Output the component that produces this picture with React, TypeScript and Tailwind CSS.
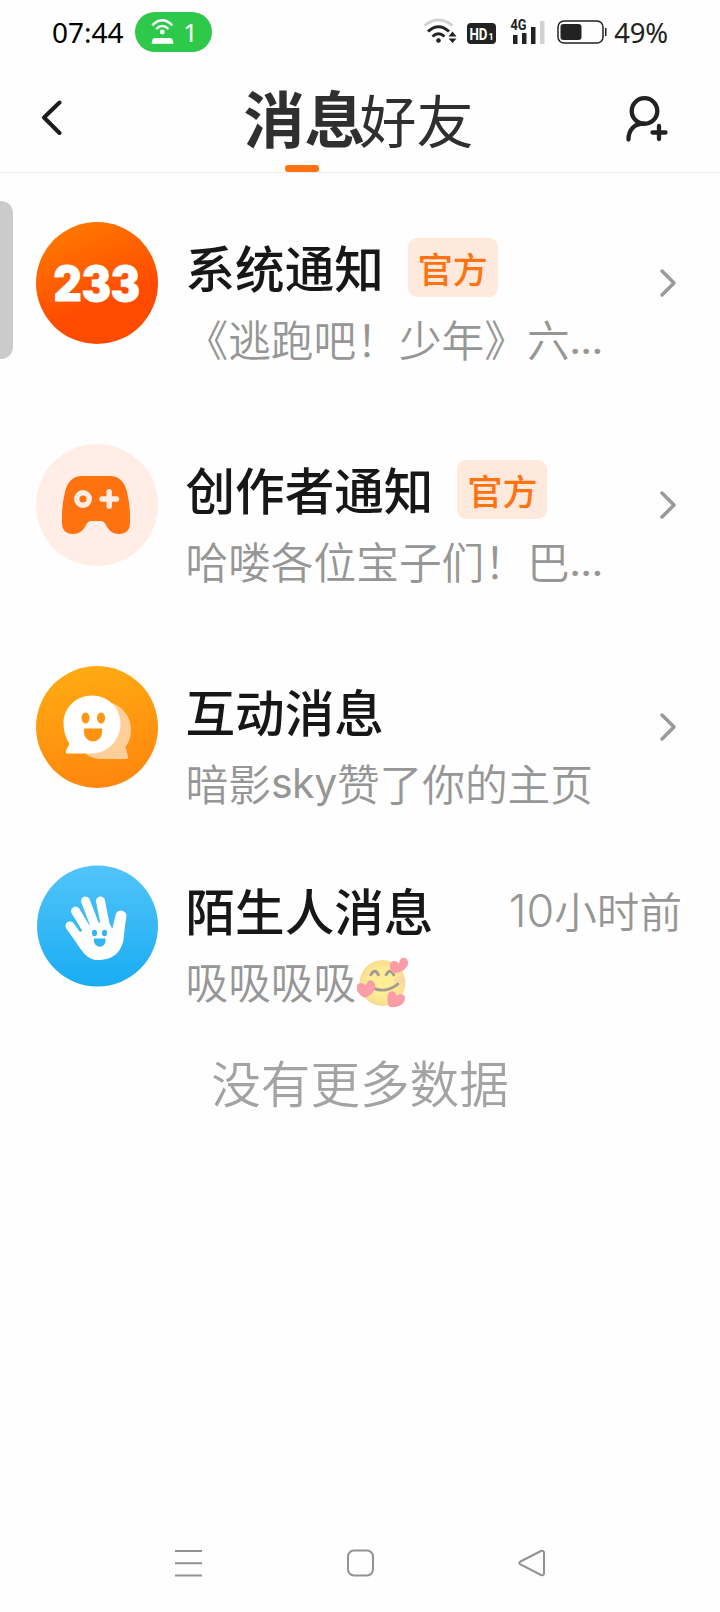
import type { ReactNode } from "react";

function StatusBar() {
  return (
    <div className="flex h-16 items-center pl-[52px] pr-[52px] font-['Noto_Sans'] text-[28px] leading-none text-black">
      <span className="w-[83px]">07:44</span>
      <span className="flex h-10 w-[77px] items-center rounded-full bg-[#2ec84b] pl-4 text-[26px] text-white">
        <svg width="23" height="26" viewBox="0 0 23 26" fill="none" stroke="#fff" strokeWidth="2.4">
          <path d="M1.3 6.4Q11.3-3.8 21.3 6.4" />
          <path d="M5.2 10Q11.3 3.8 17.4 10" />
          <circle cx="11.3" cy="13" r="2.4" fill="#fff" stroke="none" />
          <path d="M4 19h15q2 0 2.7 2l.8 3.7H.5L1.3 21Q2 19 4 19Z" fill="#fff" stroke="none" />
        </svg>
        <span className="ml-[9px]">1</span>
      </span>
      <span className="flex-1" />
      <svg width="34" height="28" viewBox="0 0 34 28" fill="none" className="mr-[10px]">
        <path d="M1.5 7.5Q15.500-3.500 29.500 7.500" stroke="#d2d2d2" strokeWidth="2.7" />
        <path d="M5 13.500Q15.500 4 26 13.500" stroke="#222" strokeWidth="3" />
        <path d="M9.500 18.500Q15.500 13 21.500 18.500" stroke="#222" strokeWidth="3" />
        <circle cx="15.500" cy="22.500" r="2.300" fill="#222" />
        <path d="m29.500 13.500 4 5h-8ZM29.500 25l-4-4.600h8Z" fill="#222" />
      </svg>
      <span className="mr-[14px] mt-[2px] flex h-[21px] w-[29px] items-center justify-center rounded-[4px] bg-[#222]">
        <svg width="25" height="17" viewBox="0 0 25 17" fontFamily="Roboto" fontWeight="700" fill="#fff">
          <text x="0.500" y="14.500" fontSize="17" textLength="18" lengthAdjust="spacingAndGlyphs">HD</text>
          <text x="19.500" y="14.500" fontSize="9">1</text>
        </svg>
      </span>
      <svg width="36" height="28" viewBox="0 -1 36 28" className="mr-[11px]">
        <text x="0.500" y="11" textLength="16" lengthAdjust="spacingAndGlyphs" fontFamily="Roboto" fontSize="14.500" fontWeight="700" fill="#222">4G</text>
        <path d="M3 16h4.500v9H3ZM12 14h4.500v11H12ZM21 8h4.500v17H21Z" fill="#222" />
        <path d="M30 2h4.500v23H30Z" fill="#d2d2d2" />
      </svg>
      <svg width="50" height="24" viewBox="0 0 50 24" className="mr-[7px]">
        <rect x="1" y="1" width="45" height="22" rx="6" fill="none" stroke="#222" strokeWidth="1.500" />
        <rect x="3.500" y="4" width="21" height="16" rx="3" fill="#222" />
        <path d="M48 8h1.500v8H48Z" fill="#222" />
      </svg>
      <span className="mt-px text-[27.500px] tracking-[-0.200px] text-[#222]">49%</span>
    </div>
  );
}

function Header() {
  return (
    <div className="flex h-[109px] items-center border-b border-[#ececec] pl-[41px] pr-[52px] text-[#2f2f2f]">
      <svg width="22" height="36" viewBox="0 0 22 36" fill="none" stroke="#1c1c1c" strokeWidth="4" strokeLinecap="round" strokeLinejoin="round">
        <path d="M18.500 2.500 3 17.500l15.500 15.500" />
      </svg>
      <div className="flex h-full flex-1 justify-center pl-[28px]">
        <div className="relative flex items-center pb-[3px] text-[61px] font-bold leading-none">
          消息
          <span className="absolute bottom-0 left-[42px] h-[7px] w-[34px] rounded-[3px] bg-[#ff7210]" />
        </div>
        <div className="-ml-[6px] flex items-center text-[57px] font-normal leading-none">好友</div>
      </div>
      <svg width="42" height="46" viewBox="0 0 42 46" fill="none" stroke="#222" strokeWidth="4.300" className="mt-[1px]">
        <circle cx="18.500" cy="15" r="12.800" />
        <path d="M2.500 43.500C2.500 34 8 27.500 18 27.500" strokeLinecap="round" />
        <path d="M26.500 36.500h13M33 30v13" strokeLinecap="round" />
      </svg>
    </div>
  );
}

function LogoAvatar() {
  return (
    <svg width="122" height="122" viewBox="0 0 122 122">
      <defs>
        <linearGradient id="logo" x1="0.2" y1="0" x2="0.5" y2="0.7">
          <stop offset="0" stopColor="#ff7b00" />
          <stop offset="1" stopColor="#ff4b00" />
        </linearGradient>
      </defs>
      <circle cx="61" cy="61" r="61" fill="url(#logo)" />
      <text x="17.500" y="78.500" textLength="86.500" lengthAdjust="spacingAndGlyphs" fontFamily="Inter" fontSize="48" fontWeight="900" fill="#fff" stroke="#fff" strokeWidth="1">233</text>
    </svg>
  );
}

function GamepadAvatar() {
  return (
    <svg width="122" height="122" viewBox="0 0 122 122">
      <circle cx="61" cy="61" r="61" fill="#ffede6" />
      <path d="M46 32H74C84 32 89 39 91 48Q94 60 94 72V79C94 86 90 90 83 90C77 90 73 87 70 81Q68 77 65 77H55Q52 77 50 81C47 87 43 90 37 90C30 90 26 86 26 79V72Q26 60 29 48C31 39 36 32 46 32Z" fill="#ff7210" />
      <circle cx="47" cy="55" r="6.300" fill="none" stroke="#ffede6" strokeWidth="5.400" />
      <path d="M66 55h14.500M73.200 47.700v14.600" stroke="#ffede6" strokeWidth="5.400" strokeLinecap="round" />
    </svg>
  );
}

function ChatAvatar() {
  return (
    <svg width="122" height="122" viewBox="0 0 122 122">
      <defs>
        <linearGradient id="chat" x1="0.4" y1="0" x2="0.6" y2="1">
          <stop offset="0" stopColor="#ffab12" />
          <stop offset="1" stopColor="#ff850e" />
        </linearGradient>
      </defs>
      <circle cx="61" cy="61" r="61" fill="url(#chat)" />
      <path d="M76 37C87 41 95 51 95 64Q95 74 89.500 81L92 90Q92.500 93 90 93H63Q56 92.500 50 88Z" fill="#ffcf9a" />
      <path d="M56 29.500C72 29.500 84.500 42 84.500 57C84.500 74 72 87.500 55 87.500H31.500Q29 87 30 84.500L33.500 78Q27.500 69 27.500 57C27.500 42 40 29.500 56 29.500Z" fill="#fff" />
      <ellipse cx="49.500" cy="52" rx="4" ry="5.500" fill="#ff9610" />
      <ellipse cx="65" cy="52" rx="4" ry="5.500" fill="#ff9610" />
      <path d="M48 62.500h18v4a9 9 0 0 1-18 0Z" fill="#ff9210" />
    </svg>
  );
}

function HandAvatar() {
  return (
    <svg width="122" height="122" viewBox="0 0 122 122">
      <defs>
        <linearGradient id="hand" x1="0" y1="0" x2="0" y2="1">
          <stop offset="0" stopColor="#52c4fa" />
          <stop offset="1" stopColor="#19acf2" />
        </linearGradient>
      </defs>
      <circle cx="61.500" cy="61" r="60.500" fill="url(#hand)" />
      <g stroke="#fff" strokeWidth="9" strokeLinecap="round">
        <path d="m34 61 16 22M39.500 46 54 70M49.500 36 61 66M64.500 36 70 64" />
        <path d="M85 51 80 72" strokeWidth="11" />
      </g>
      <path d="M47 65 58 57 74 59Q77 68 82 61L90 52 88 70C87 87 77 95 62 95C51 95 46 87 37 72Z" fill="#fff" />
      <ellipse cx="58.500" cy="68" rx="2.500" ry="3.300" fill="#31b4f4" />
      <ellipse cx="68.500" cy="68" rx="2.500" ry="3.300" fill="#31b4f4" />
      <path d="M58 73.500h11.500v2.500a5.750 5.750 0 0 1-11.500 0Z" fill="#31b4f4" />
    </svg>
  );
}

function HeartsFace() {
  return (
    <svg width="51" height="51" viewBox="0 0 50 50" className="ml-px mt-[3px] inline-block opacity-50">
      <defs>
        <radialGradient id="face">
          <stop offset="0.500" stopColor="#fde030" />
          <stop offset="1" stopColor="#f3bd26" />
        </radialGradient>
      </defs>
      <circle cx="25" cy="25.500" r="22.500" fill="url(#face)" />
      <ellipse cx="41" cy="23" rx="5" ry="4" fill="#ff9b62" opacity="0.6" />
      <path d="M13.500 17.500q4-7 7.500 0M28.500 17.500q4-7 7.500 0M16 30.500Q28 36 40 26.500" fill="none" stroke="#493b25" strokeWidth="2.800" strokeLinecap="round" />
      <g fill="#fa3e51">
        <path d="M35 16C30 9 32 4 37 4Q39.500 4 41 6.500Q42.500-.5 47 1C54 4 49 16 35 16Z" />
        <path d="M7 40C-1 35-2 29 1 26.500Q5 24 8.500 28Q11 21 15.500 23.500C21 28 17 37 7 40Z" />
        <path d="M31.500 49C28.500 41 29.500 34 34 33.500Q38 33.500 38.500 38Q44.500 34 47 39C48 46 41 50 31.500 49Z" />
      </g>
    </svg>
  );
}

interface RowProps {
  avatar: ReactNode;
  title: string;
  preview: ReactNode;
  official?: boolean;
  time?: ReactNode;
  compact?: boolean;
}

function MessageRow({ avatar, title, preview, official, time, compact }: RowProps) {
  return (
    <div className={`flex items-center pl-9 ${compact ? "h-[175px] pr-[38px]" : "h-[222px] pr-[42px]"}`}>
      <div className="shrink-0">{avatar}</div>
      <div className="ml-[27.500px] flex-1 whitespace-nowrap pt-[39px]">
        <div className="flex h-[71px] items-center">
          <span className="text-[49.6px] font-medium leading-none text-[#171717]">{title}</span>
          {official && (
            <span className="ml-6 flex h-[59px] w-[90px] items-center justify-center rounded-[9px] bg-[#ffe9dc] text-[35px] font-medium leading-none text-[#ff7210]">
              官方
            </span>
          )}
          {time && (
            <span className="ml-auto flex items-center pt-[2px] text-[42.600px] font-[350] leading-none text-[#969696]">
              {time}
            </span>
          )}
        </div>
        <div className="flex h-[71px] items-center text-[42.700px] font-[350] leading-none text-[#969696]">{preview}</div>
      </div>
      {!time && (
        <svg width="20" height="30" viewBox="0 0 20 30" fill="none" stroke="#999" strokeWidth="3.500" strokeLinecap="round" strokeLinejoin="round">
          <path d="m4 3 12 12L4 27" />
        </svg>
      )}
    </div>
  );
}

function Dots() {
  return <span className="mt-[5px] font-['Roboto'] text-[40px] font-medium">...</span>;
}

function NavBar() {
  return (
    <div className="mt-auto flex h-[98px] items-center justify-between pl-[174px] pr-[174px]">
      <svg width="29" height="30" viewBox="0 0 29 30" stroke="#929292" strokeWidth="2">
        <path d="M1 3h27M1 15.300h27M1 27.500h27" />
      </svg>
      <svg width="28" height="28" viewBox="0 0 28 28" fill="none" stroke="#929292" strokeWidth="2">
        <rect x="1" y="1.500" width="25" height="25" rx="6" />
      </svg>
      <svg width="28" height="28" viewBox="0 0 28 28" fill="none" stroke="#929292" strokeWidth="2">
        <path d="M2.500 12.500 23 2Q26 1 26 4V24Q26 27 23 26L2.500 15.500Q0 14 2.500 12.500Z" />
      </svg>
    </div>
  );
}

export default function App() {
  return (
    <div lang="zh-CN" className="relative flex h-[1612px] w-[720px] flex-col overflow-hidden bg-[#fefefe] font-['Noto_Sans_CJK_SC',sans-serif]">
      <StatusBar />
      <Header />
      <span className="absolute left-0 top-[201px] h-[158px] w-[13px] rounded-r-[12px] bg-[#cbcbcb]" />
      <div className="-mt-px flex flex-col">
        <MessageRow
          avatar={<LogoAvatar />}
          title="系统通知"
          official
          preview={<>《逃跑吧！少年》六<Dots /></>}
        />
        <MessageRow
          avatar={<GamepadAvatar />}
          title="创作者通知"
          official
          preview={<>哈喽各位宝子们！巴<Dots /></>}
        />
        <MessageRow
          avatar={<ChatAvatar />}
          title="互动消息"
          preview={<>暗影<span className="mt-[3px] font-['Inter'] text-[41px] font-normal tracking-[-0.400px]">sky</span>赞了你的主页</>}
        />
        <MessageRow
          avatar={<HandAvatar />}
          title="陌生人消息"
          time={<><span className="font-['Inter'] text-[45px] font-light">10</span>小时前</>}
          compact
          preview={<>吸吸吸吸<HeartsFace /></>}
        />
      </div>
      <p className="mt-[44px] text-center text-[49.600px] font-[350] leading-none text-[#a3a3a3]">没有更多数据</p>
      <NavBar />
    </div>
  );
}
